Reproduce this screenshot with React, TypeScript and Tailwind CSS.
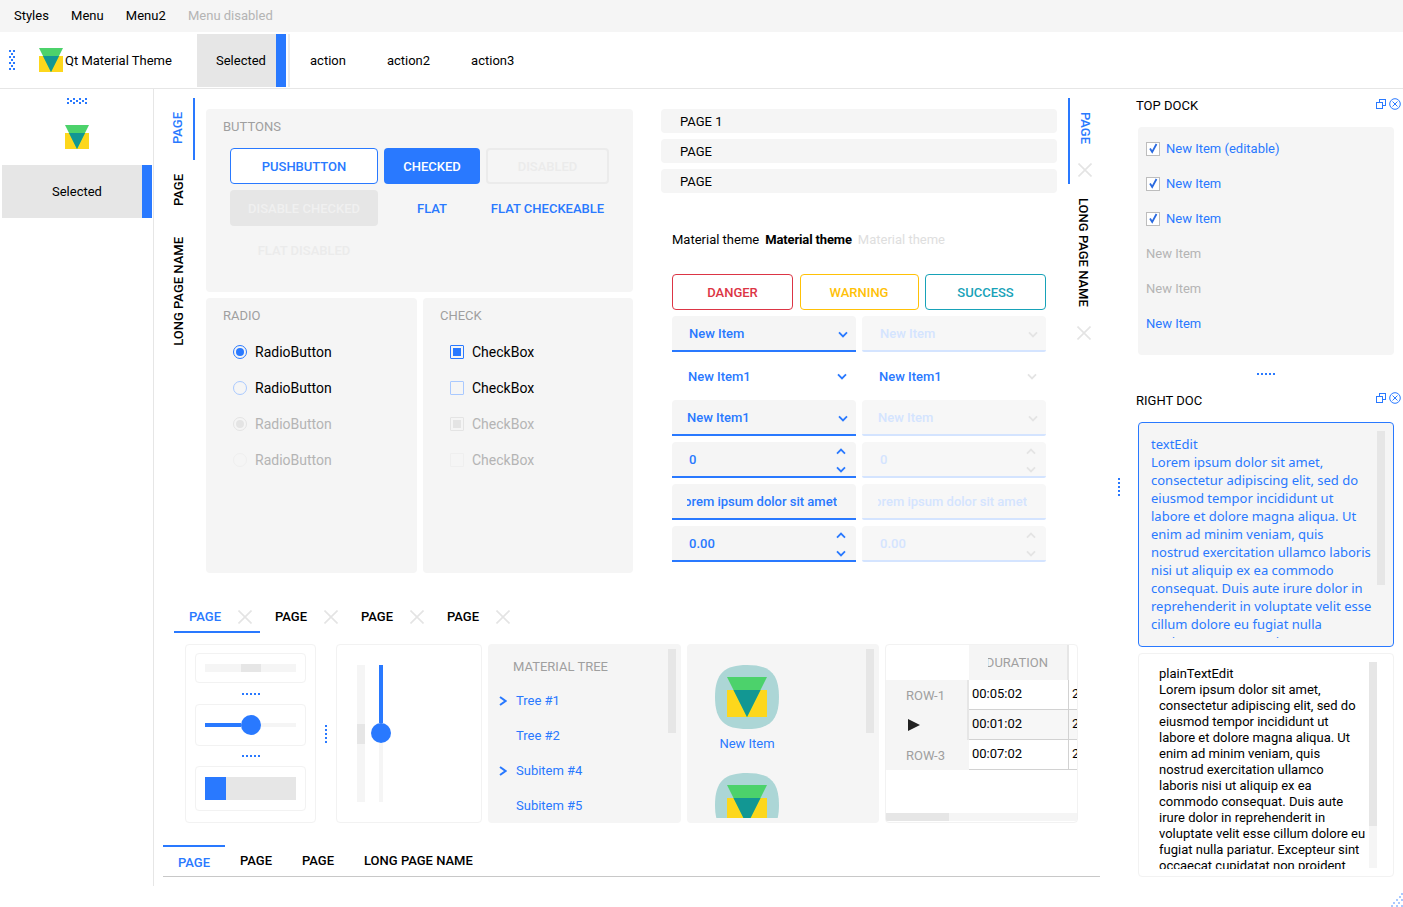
import type { ReactNode } from "react"

const BLUE = "#2979ff"

const Logo = ({ className }: { className: string }) => (
  <svg viewBox="0 0 24 24" className={className}>
    <rect x="0" y="8" width="24" height="16" fill="#fdd71c" />
    <polygon points="0,0 24,0 12,24" fill="#4cd26b" />
    <polygon points="4,8 20,8 12,24" fill="#129793" />
  </svg>
)

const BigIcon = () => (
  <svg viewBox="0 0 64 64" className="w-16 h-16 shrink-0">
    <path d="M32 0C54 0 64 8 64 32C64 56 54 64 32 64C10 64 0 56 0 32C0 8 10 0 32 0Z" fill="#acd6d6" />
    <rect x="12" y="25" width="40" height="27" fill="#fdd71c" />
    <polygon points="12,12 52,12 32,52" fill="#4cd26b" />
    <polygon points="18.5,25 45.5,25 32,52" fill="#129793" />
  </svg>
)

const HDots = ({ className = "" }: { className?: string }) => (
  <svg width="18" height="2" className={className}>
    {[0, 4, 8, 12, 16].map((x) => (
      <rect key={x} x={x} y="0" width="2" height="2" fill={BLUE} />
    ))}
  </svg>
)

const VDots = ({ className = "" }: { className?: string }) => (
  <svg width="2" height="18" className={className}>
    {[0, 4, 8, 12, 16].map((y) => (
      <rect key={y} x="0" y={y} width="2" height="2" fill={BLUE} />
    ))}
  </svg>
)

const CheckerV = () => (
  <svg width="6" height="20" className="shrink-0">
    <g fill={BLUE}>
      {[0, 6, 12, 18].map((y) => (
        <g key={y}>
          <rect x="0" y={y} width="2" height="2" />
          <rect x="4" y={y} width="2" height="2" />
        </g>
      ))}
      {[3, 9, 15].map((y) => (
        <rect key={y} x="2" y={y} width="2" height="2" />
      ))}
    </g>
  </svg>
)

const CheckerH = () => (
  <svg width="20" height="6">
    <g fill={BLUE}>
      {[0, 6, 12, 18].map((x) => (
        <g key={x}>
          <rect x={x} y="0" width="2" height="2" />
          <rect x={x} y="4" width="2" height="2" />
        </g>
      ))}
      {[3, 9, 15].map((x) => (
        <rect key={x} x={x} y="2" width="2" height="2" />
      ))}
    </g>
  </svg>
)

const CloseX = ({ className = "" }: { className?: string }) => (
  <svg viewBox="0 0 14 14" className={"w-[14px] h-[14px] shrink-0 " + className}>
    <path d="M0.5 0.5L13.5 13.5M13.5 0.5L0.5 13.5" stroke="#e4e4e4" strokeWidth="1.6" fill="none" />
  </svg>
)

const Chevron = ({ up, color }: { up?: boolean; color: string }) => (
  <svg width="10" height="7" viewBox="0 0 10 7" className="shrink-0">
    <path d={up ? "M1 5.6L5 1.6L9 5.6" : "M1 1.4L5 5.4L9 1.4"} stroke={color} strokeWidth="1.8" fill="none" />
  </svg>
)

const DockIcons = () => (
  <div className="flex items-center gap-[3px]">
    <svg width="10" height="10" viewBox="0 0 10 10" fill="none" stroke={BLUE} strokeWidth="1">
      <rect x="3.5" y="0.5" width="6" height="6" />
      <rect x="0.5" y="3.5" width="6" height="6" fill="#fff" />
    </svg>
    <svg width="12" height="12" viewBox="0 0 12 12" fill="none" stroke={BLUE} strokeWidth="1">
      <circle cx="6" cy="6" r="5.3" />
      <path d="M3.5 3.5L8.5 8.5M8.5 3.5L3.5 8.5" />
    </svg>
  </div>
)

const VTab = ({ children, active, className = "" }: { children: ReactNode; active?: boolean; className?: string }) => (
  <span
    className={
      "[writing-mode:vertical-rl] rotate-180 text-[13px] leading-4 font-medium whitespace-nowrap " +
      (active ? "text-[#2979ff] " : "text-black ") +
      className
    }
  >
    {children}
  </span>
)

const Btn = ({ label, className }: { label: string; className: string }) => (
  <div className={"h-9 pt-[1px] flex items-center justify-center rounded-[4px] text-[13px] font-medium whitespace-nowrap " + className}>
    {label}
  </div>
)

const Radio = ({ mode }: { mode: "on" | "off" | "disOn" | "disOff" }) => {
  if (mode === "on")
    return (
      <span className="w-[14px] h-[14px] rounded-full border border-[#2979ff] flex items-center justify-center">
        <span className="w-2 h-2 rounded-full bg-[#2979ff]" />
      </span>
    )
  if (mode === "off") return <span className="w-[14px] h-[14px] rounded-full border border-[#a9c9ff]" />
  if (mode === "disOn")
    return (
      <span className="w-[14px] h-[14px] rounded-full border border-[#e4e4e4] flex items-center justify-center">
        <span className="w-2 h-2 rounded-full bg-[#e4e4e4]" />
      </span>
    )
  return <span className="w-[14px] h-[14px] rounded-full border border-[#efefef]" />
}

const Check = ({ mode }: { mode: "on" | "off" | "disOn" | "disOff" }) => {
  if (mode === "on")
    return (
      <span className="w-[14px] h-[14px] rounded-[1px] border border-[#2979ff] flex items-center justify-center">
        <span className="w-2 h-2 bg-[#2979ff]" />
      </span>
    )
  if (mode === "off") return <span className="w-[14px] h-[14px] rounded-[1px] border border-[#a9c9ff]" />
  if (mode === "disOn")
    return (
      <span className="w-[14px] h-[14px] rounded-[1px] border border-[#e4e4e4] flex items-center justify-center">
        <span className="w-2 h-2 bg-[#e4e4e4]" />
      </span>
    )
  return <span className="w-[14px] h-[14px] rounded-[1px] border border-[#efefef]" />
}

const GroupRow = ({ icon, label, disabled }: { icon: ReactNode; label: string; disabled?: boolean }) => (
  <div className="h-9 flex items-center gap-2">
    {icon}
    <span className={"text-sm " + (disabled ? "text-[#b4b4b4]" : "text-black")}>{label}</span>
  </div>
)

const Field = ({
  disabled,
  plain,
  children,
  right,
}: {
  disabled?: boolean
  plain?: boolean
  children: ReactNode
  right?: ReactNode
}) => (
  <div
    className={
      "h-9 flex items-center justify-between text-[13px] font-medium " +
      (plain
        ? "pt-[1px] text-[#2979ff]"
        : "pt-[2px] rounded-t-[4px] border-b-2 " +
          (disabled
            ? "bg-[#f7f7f7] border-[#d4e4ff] text-[#d4e4ff] rounded-b-[2px]"
            : "bg-[#f5f5f5] border-[#2979ff] text-[#2979ff]"))
    }
  >
    {children}
    {right}
  </div>
)

const Spin = ({ color }: { color: string }) => (
  <div className="flex flex-col gap-[11px] mr-[10px]">
    <Chevron up color={color} />
    <Chevron color={color} />
  </div>
)

const TreeRow = ({ label, arrow }: { label: string; arrow?: boolean }) => (
  <div className="h-[35px] flex items-center text-[13px] text-[#2979ff]">
    <span className="w-[28px] pl-[11px]">
      {arrow && (
        <svg width="8" height="10" viewBox="0 0 8 10">
          <path d="M1 1L6.5 5L1 9" stroke={BLUE} strokeWidth="2" fill="none" />
        </svg>
      )}
    </span>
    {label}
  </div>
)

const TableRow = ({ time, even }: { time: string; even?: boolean }) => (
  <div className={"h-[30px] flex border-b border-[#d2d2d2] overflow-hidden text-[13px] text-black " + (even ? "bg-[#f7f7f7]" : "bg-white")}>
    <span className="w-[100px] shrink-0 pl-[3px] pt-[4px] border-r border-[#d2d2d2]">{time}</span>
    <span className="shrink-0 pl-[3px] pt-[4px]">2</span>
  </div>
)

const dockItems = [
  { label: "New Item (editable)", check: true, color: "text-[#2979ff]" },
  { label: "New Item", check: true, color: "text-[#2979ff]" },
  { label: "New Item", check: true, color: "text-[#2979ff]" },
  { label: "New Item", check: false, color: "text-[#b4b4b4]" },
  { label: "New Item", check: false, color: "text-[#b4b4b4]" },
  { label: "New Item", check: false, color: "text-[#2979ff]" },
]

const App = () => {
  return (
    <div className="w-[1403px] h-[907px] overflow-hidden bg-white font-[Roboto,sans-serif] relative">
      {/* menu bar */}
      <div className="h-8 bg-[#f5f5f5] flex items-center pl-[14px] gap-[22.2px] text-[13px] text-black">
        <span>Styles</span>
        <span>Menu</span>
        <span>Menu2</span>
        <span className="text-[#b4b4b4]">Menu disabled</span>
      </div>

      {/* toolbar */}
      <div className="h-[57px] border-b border-[#e6e6e6] flex items-center text-[13px] text-black">
        <div className="ml-[9px]">
          <CheckerV />
        </div>
        <Logo className="w-6 h-6 ml-6" />
        <span className="ml-[2px] w-[132px] pt-[2px]">Qt Material Theme</span>
        <div className="w-[89px] h-[53px] self-start mt-[2px] flex bg-[#e6e6e6]">
          <span className="flex-1 flex items-center pl-[19px] pt-[1px]">Selected</span>
          <span className="w-[10px] bg-[#2979ff]" />
        </div>
        <span className="ml-[2px] w-[2px] h-[53px] self-start mt-[2px] bg-[#ececec]" />
        <span className="ml-[20px] pt-[2px]">action</span>
        <span className="ml-[41px] pt-[2px]">action2</span>
        <span className="ml-[41px] pt-[2px]">action3</span>
      </div>

      <div className="flex">
        {/* left dock */}
        <div className="w-[154px] h-[797px] border-r border-[#e6e6e6] flex flex-col shrink-0">
          <div className="mt-[9px] ml-[67px] h-[6px] flex">
            <CheckerH />
          </div>
          <Logo className="w-6 h-6 mt-[21px] ml-[65px]" />
          <div className="w-[150px] h-[53px] mt-4 ml-[2px] flex bg-[#e6e6e6] text-[13px] text-black">
            <span className="flex-1 flex items-center pl-[50px]">Selected</span>
            <span className="w-[10px] bg-[#2979ff]" />
          </div>
        </div>

        {/* central */}
        <div className="w-[946px] shrink-0 flex flex-col">
          <div className="flex h-[498px]">
            {/* west tabs */}
            <div className="ml-[9px] w-[32px] mt-[9px] flex flex-col shrink-0">
              <div className="h-[62px] border-r-2 border-[#2979ff] flex items-center justify-center">
                <VTab active className="mt-[-1px]">PAGE</VTab>
              </div>
              <div className="h-[60px] flex items-center justify-center">
                <VTab>PAGE</VTab>
              </div>
              <div className="mt-[17px] flex justify-center">
                <VTab>LONG PAGE NAME</VTab>
              </div>
            </div>

            {/* group boxes */}
            <div className="ml-[11px] w-[427px] mt-5 flex flex-col gap-[6px] shrink-0">
              <div className="h-[183px] bg-[#f5f5f5] rounded-[4px] pl-[24px]">
                <div className="-ml-[7px] h-[39px] flex items-center text-[13px] text-[#9f9f9f] pb-[4px]">BUTTONS</div>
                <div className="grid grid-cols-[148px_96px_123px] gap-[6px]">
                  <Btn label="PUSHBUTTON" className="bg-white border border-[#2979ff] text-[#2979ff]" />
                  <Btn label="CHECKED" className="bg-[#2979ff] text-white" />
                  <Btn label="DISABLED" className="border-2 border-[#ebebeb] text-[#ebebeb]" />
                  <Btn label="DISABLE CHECKED" className="bg-[#e6e6e6] text-[#f0f0f0]" />
                  <Btn label="FLAT" className="text-[#2979ff]" />
                  <Btn label="FLAT CHECKEABLE" className="text-[#2979ff]" />
                  <Btn label="FLAT DISABLED" className="text-[#ebebeb]" />
                </div>
              </div>
              <div className="flex gap-[6px]">
                <div className="w-[211px] h-[275px] bg-[#f5f5f5] rounded-[4px]">
                  <div className="pl-[17px] h-[36px] flex items-center text-[13px] text-[#9f9f9f]">RADIO</div>
                  <div className="pl-[27px]">
                    <GroupRow icon={<Radio mode="on" />} label="RadioButton" />
                    <GroupRow icon={<Radio mode="off" />} label="RadioButton" />
                    <GroupRow icon={<Radio mode="disOn" />} label="RadioButton" disabled />
                    <GroupRow icon={<Radio mode="disOff" />} label="RadioButton" disabled />
                  </div>
                </div>
                <div className="w-[210px] h-[275px] bg-[#f5f5f5] rounded-[4px]">
                  <div className="pl-[17px] h-[36px] flex items-center text-[13px] text-[#9f9f9f]">CHECK</div>
                  <div className="pl-[27px]">
                    <GroupRow icon={<Check mode="on" />} label="CheckBox" />
                    <GroupRow icon={<Check mode="off" />} label="CheckBox" />
                    <GroupRow icon={<Check mode="disOn" />} label="CheckBox" disabled />
                    <GroupRow icon={<Check mode="disOff" />} label="CheckBox" disabled />
                  </div>
                </div>
              </div>
            </div>

            {/* toolbox and form */}
            <div className="ml-[28px] w-[396px] mt-5 flex flex-col shrink-0 text-[13px]">
              {[0, 1, 2].map((i) => (
                <div key={i} className="h-6 mb-[6px] pt-[1px] bg-[#f5f5f5] rounded-[4px] pl-[19px] flex items-center text-black">
                  {i === 0 ? "PAGE 1" : "PAGE"}
                </div>
              ))}
              <div className="ml-[11px] mt-[26px] flex gap-[6px] h-[30px] items-center text-black">
                <span>Material theme</span>
                <span className="font-bold tracking-[-0.14px]">Material theme</span>
                <span className="text-[#dedede]">Material theme</span>
              </div>
              <div className="ml-[11px] mt-[19px] w-[374px] flex flex-col gap-[6px]">
                <div className="grid grid-cols-[121px_119px_121px] gap-[6.5px]">
                  <Btn label="DANGER" className="border border-[#dc3545] text-[#dc3545]" />
                  <Btn label="WARNING" className="border border-[#ffc107] text-[#ffc107]" />
                  <Btn label="SUCCESS" className="border border-[#17a2b8] text-[#17a2b8]" />
                </div>
                <div className="grid grid-cols-[184px_184px] gap-x-[6px] gap-y-[6px]">
                  <Field right={<span className="mr-[8px]"><Chevron color={BLUE} /></span>}>
                    <span className="pl-[17px]">New Item</span>
                  </Field>
                  <Field disabled right={<span className="mr-[8px]"><Chevron color="#e4e4e4" /></span>}>
                    <span className="pl-[18px]">New Item</span>
                  </Field>
                  <Field plain right={<span className="mr-[9px]"><Chevron color={BLUE} /></span>}>
                    <span className="pl-[16px]">New Item1</span>
                  </Field>
                  <Field plain right={<span className="mr-[9px]"><Chevron color="#e4e4e4" /></span>}>
                    <span className="pl-[17px]">New Item1</span>
                  </Field>
                  <Field right={<span className="mr-[8px]"><Chevron color={BLUE} /></span>}>
                    <span className="pl-[15px]">New Item1</span>
                  </Field>
                  <Field disabled right={<span className="mr-[8px]"><Chevron color="#e4e4e4" /></span>}>
                    <span className="pl-[16px]">New Item</span>
                  </Field>
                  <Field right={<Spin color={BLUE} />}>
                    <span className="pl-[17px]">0</span>
                  </Field>
                  <Field disabled right={<Spin color="#e4e4e4" />}>
                    <span className="pl-[18px]">0</span>
                  </Field>
                  <Field>
                    <span className="ml-[15px] w-[150px] overflow-hidden whitespace-nowrap flex justify-end">Lorem ipsum dolor sit amet</span>
                  </Field>
                  <Field disabled>
                    <span className="ml-[16px] w-[149px] overflow-hidden whitespace-nowrap flex justify-end">Lorem ipsum dolor sit amet</span>
                  </Field>
                  <Field right={<Spin color={BLUE} />}>
                    <span className="pl-[17px]">0.00</span>
                  </Field>
                  <Field disabled right={<Spin color="#e4e4e4" />}>
                    <span className="pl-[18px]">0.00</span>
                  </Field>
                </div>
              </div>
            </div>

            {/* east tabs */}
            <div className="ml-[11px] w-[32px] mt-[9px] flex flex-col shrink-0">
              <div className="h-[86px] border-l-2 border-[#2979ff] flex flex-col items-center pt-[14px]">
                <span className="[writing-mode:vertical-rl] text-[13px] leading-4 font-medium text-[#2979ff] -ml-[1px]">PAGE</span>
                <CloseX className="mt-[19px] -ml-[1px]" />
              </div>
              <div className="flex flex-col items-center pt-[14px] pr-[2px]">
                <span className="[writing-mode:vertical-rl] text-[13px] leading-4 font-medium text-black whitespace-nowrap">LONG PAGE NAME</span>
                <CloseX className="mt-[19px] ml-[2px]" />
              </div>
            </div>
          </div>

          {/* document tabs */}
          <div className="ml-5 mt-[17px] flex h-[29px]">
            {[0, 1, 2, 3].map((i) => (
              <div
                key={i}
                className={
                  "w-[86px] flex items-center pl-[15px] text-[13px] font-medium " +
                  (i === 0 ? "text-[#2979ff] border-b-2 border-[#2979ff] pb-[1px]" : "text-black pb-[3px]")
                }
              >
                <span>PAGE</span>
                <CloseX className="ml-[17px]" />
              </div>
            ))}
          </div>

          {/* bottom panels */}
          <div className="mt-[11px] ml-[31px] flex h-[179px] items-stretch">
            <div className="w-[131px] border border-[#f2f2f2] rounded-[4px] px-[9px] pt-[8px]">
              <div className="h-[30px] border border-[#f2f2f2] rounded-[4px] flex items-center px-[9px]">
                <div className="h-2 w-full bg-[#f5f5f5] pl-9">
                  <div className="h-2 w-5 bg-[#e6e6e6]" />
                </div>
              </div>
              <div className="h-[21px] flex items-center justify-center"><HDots /></div>
              <div className="h-[42px] border border-[#f2f2f2] rounded-[4px] flex items-center px-[9px] pb-[1px]">
                <div className="h-1 w-full bg-[#f5f5f5] flex items-center">
                  <div className="h-1 w-9 bg-[#2979ff]" />
                  <div className="w-5 h-5 shrink-0 rounded-full bg-[#2979ff]" />
                </div>
              </div>
              <div className="h-5 flex items-center justify-center"><HDots /></div>
              <div className="h-[45px] border border-[#f2f2f2] rounded-[4px] flex items-center px-[9px]">
                <div className="h-[23px] w-full bg-[#e6e6e6]">
                  <div className="h-[23px] w-[21px] bg-[#2979ff]" />
                </div>
              </div>
            </div>
            <div className="w-5 flex items-center justify-center"><VDots /></div>
            <div className="w-[146px] border border-[#f2f2f2] rounded-[4px] flex pl-5 pt-5">
              <div className="w-2 h-[137px] bg-[#f5f5f5] pt-[59px]">
                <div className="w-2 h-5 bg-[#e6e6e6]" />
              </div>
              <div className="ml-[6px] w-5 h-[137px] flex flex-col items-center">
                <div className="w-1 h-[58px] bg-[#2979ff]" />
                <div className="w-5 h-5 rounded-full bg-[#2979ff] shrink-0" />
                <div className="w-1 flex-1 bg-[#f5f5f5]" />
              </div>
            </div>
            <div className="ml-[6px] w-[193px] bg-[#f5f5f5] rounded-[4px] flex justify-between pr-[5px] overflow-hidden">
              <div className="flex-1">
                <div className="h-[39px] pl-[25px] pt-[7px] flex items-center text-[13px] text-[#9f9f9f]">MATERIAL TREE</div>
                <TreeRow label="Tree #1" arrow />
                <TreeRow label="Tree #2" />
                <TreeRow label="Subitem #4" arrow />
                <TreeRow label="Subitem #5" />
              </div>
              <div className="w-2 h-[84px] mt-[5px] bg-[#e6e6e6]" />
            </div>
            <div className="ml-[6px] w-[192px] bg-[#f5f5f5] rounded-[4px] flex justify-between pr-[5px] overflow-hidden">
              <div className="w-[120px] h-[174px] overflow-hidden flex flex-col items-center pt-[21px]">
                <BigIcon />
                <span className="mt-[7px] mb-[21px] h-4 leading-4 text-[13px] text-[#2979ff]">New Item</span>
                <BigIcon />
              </div>
              <div className="w-2 h-[84px] mt-[5px] bg-[#e6e6e6]" />
            </div>
            <div className="ml-[6px] w-[193px] border border-[#f2f2f2] rounded-[4px] overflow-hidden flex flex-col">
              <div className="flex-1 flex">
                <div className="w-[83px] shrink-0">
                  <div className="h-[35px]" />
                  <div className="bg-[#f5f5f5] h-[90px] text-[13px] text-[#9f9f9f]">
                    <div className="h-[30px] pl-5 flex items-center pt-[2px] border-r-2 border-[#e6e6e6]">ROW-1</div>
                    <div className="h-[30px] pl-[22px] flex items-center border-r-2 border-[#e6e6e6]">
                      <svg width="12" height="12" viewBox="0 0 12 12"><polygon points="0,0 12,6 0,12" fill="#222" /></svg>
                    </div>
                    <div className="h-[30px] pl-5 flex items-center pt-[2px]">ROW-3</div>
                  </div>
                </div>
                <div className="flex-1 min-w-0">
                  <div className="h-[35px] flex">
                    <div className="w-[100px] bg-[#f5f5f5] border-r-2 border-[#e6e6e6] flex items-center justify-center text-[13px] text-[#9f9f9f] overflow-hidden">
                      <span className="w-[60px] overflow-hidden whitespace-nowrap flex justify-end">DURATION</span>
                    </div>
                  </div>
                  <TableRow time="00:05:02" />
                  <TableRow time="00:01:02" even />
                  <TableRow time="00:07:02" />
                </div>
              </div>
              <div className="h-[8px] bg-[#f5f5f5] mb-[1px]">
                <div className="h-[8px] w-[63px] bg-[#e6e6e6]" />
              </div>
            </div>
          </div>

          {/* south tabs */}
          <div className="mt-[22px] ml-[9px] h-8 border-b border-[#c8c8c8] flex text-[13px] font-medium text-black">
            <div className="w-[62px] h-[31px] border-t-2 border-[#2979ff] flex items-center justify-center text-[#2979ff] pt-[2px]">PAGE</div>
            <div className="w-[62px] h-[31px] flex items-center justify-center">PAGE</div>
            <div className="w-[62px] h-[31px] flex items-center justify-center">PAGE</div>
            <div className="ml-[15px] h-[31px] flex items-center">LONG PAGE NAME</div>
          </div>
        </div>

        {/* right docks */}
        <div className="w-[303px] shrink-0 flex">
          <div className="w-[38px] flex flex-col items-center pt-[389px]">
            <VDots />
          </div>
          <div className="w-[256px] flex flex-col">
            <div className="h-[38px] flex items-center justify-between text-[13px] text-black -ml-[2px] -mr-[7px] pb-[4px]">
              <span>TOP DOCK</span>
              <span className="-mt-[5px]"><DockIcons /></span>
            </div>
            <div className="h-[228px] bg-[#f5f5f5] rounded-[4px] pl-2 pt-1 text-[13px]">
              {dockItems.map((it, i) => (
                <div key={i} className={"h-[35px] flex items-center gap-[6px] " + it.color}>
                  {it.check && (
                    <span className="w-[14px] h-[14px] border border-[#bdbdbd] bg-white flex items-center justify-center">
                      <svg width="10" height="11" viewBox="0 0 10 11">
                        <path d="M2 5.5L4.2 9L8.5 1" stroke="#2a6ae0" strokeWidth="1.8" fill="none" />
                      </svg>
                    </span>
                  )}
                  {it.label}
                </div>
              ))}
            </div>
            <div className="h-[38px] flex items-center justify-center"><HDots /></div>
            <div className="h-[29px] flex items-start justify-between text-[13px] text-black -ml-[2px] -mr-[7px]">
              <span className="leading-4">RIGHT DOC</span>
              <span className="-mt-[1px]"><DockIcons /></span>
            </div>
            <div className="h-[225px] border border-[#2979ff] rounded-[4px] bg-[#f5f5f5] pl-3 pt-3 flex overflow-hidden">
              <div className="w-[222px] h-[203px] overflow-hidden font-['Noto_Sans',sans-serif] text-[13px] leading-[18px] text-[#2979ff]">
                <div>textEdit</div>
                Lorem ipsum dolor sit amet, consectetur adipiscing elit, sed do eiusmod tempor incididunt ut labore et dolore magna aliqua. Ut enim ad minim veniam, quis nostrud exercitation ullamco laboris nisi ut aliquip ex ea commodo consequat. Duis aute irure dolor in reprehenderit in voluptate velit esse cillum dolore eu fugiat nulla pariatur. Excepteur sint
              </div>
              <div className="ml-[4px] -mt-[4px] w-2 h-[154px] bg-[#e6e6e6]" />
            </div>
            <div className="mt-[6px] h-[224px] border border-[#f2f2f2] rounded-[4px] flex pl-5 pt-3">
              <div className="w-[207px] h-[203px] overflow-hidden text-[13px] leading-4 text-black">
                <div>plainTextEdit</div>
                Lorem ipsum dolor sit amet, consectetur adipiscing elit, sed do eiusmod tempor incididunt ut labore et dolore magna aliqua. Ut enim ad minim veniam, quis nostrud exercitation ullamco laboris nisi ut aliquip ex ea commodo consequat. Duis aute irure dolor in reprehenderit in voluptate velit esse cillum dolore eu fugiat nulla pariatur. Excepteur sint occaecat cupidatat non proident
              </div>
              <div className="ml-[3px] -mt-[4px] w-2 h-[206px] bg-[#f5f5f5]">
                <div className="w-2 h-[164px] bg-[#e6e6e6]" />
              </div>
            </div>
          </div>
        </div>
      </div>

      {/* size grip */}
      <svg width="12" height="14" className="absolute right-0 bottom-0">
        {[
          [10, 0], [8, 3], [10, 6], [5, 6], [7, 9], [2, 9], [10, 12], [5, 12], [0, 12],
        ].map(([x, y], i) => (
          <rect key={i} x={x} y={y} width="2" height="2" fill="#a9c9ff" />
        ))}
      </svg>
    </div>
  )
}

export default App
